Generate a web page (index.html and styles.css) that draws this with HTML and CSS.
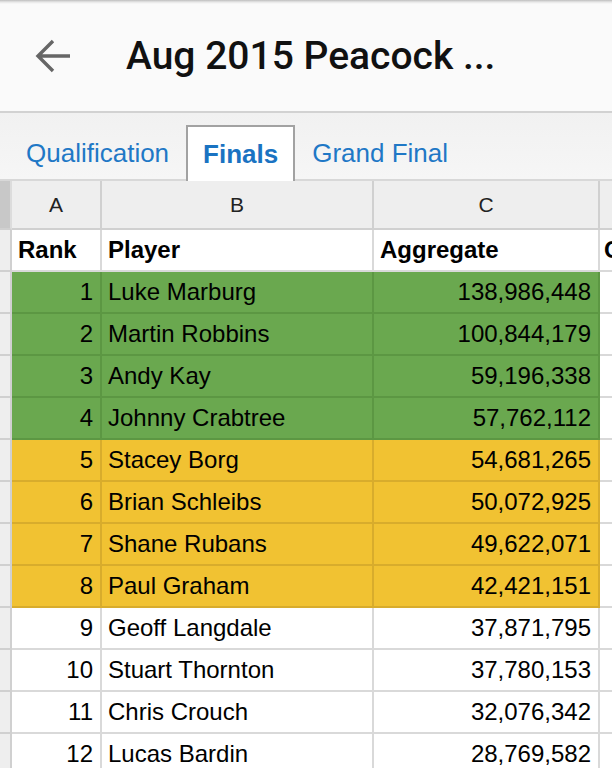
FILE: index.html
```html
<!DOCTYPE html>
<html>
<head>
<meta charset="utf-8">
<link rel="stylesheet" href="styles.css">
</head>
<body>
<div class="app">
  <header class="topbar">
    <svg class="back" width="36" height="34" viewBox="0 0 36 34"><path d="M35 17H3M18 2L3 17L18 32" fill="none" stroke="#666" stroke-width="3.4"/></svg>
    <h1 class="title">Aug 2015 Peacock ...</h1>
  </header>
  <nav class="tabs">
    <span class="tab">Qualification</span>
    <span class="tab active">Finals</span>
    <span class="tab">Grand Final</span>
  </nav>
  <div class="sheet">
    <div class="row letters"><div class="rh corner"></div><div class="cell">A</div><div class="cell">B</div><div class="cell">C</div><div class="cell d"></div></div>
    <div class="row head"><div class="rh"></div><div class="cell">Rank</div><div class="cell">Player</div><div class="cell">Aggregate</div><div class="cell d">Cut</div></div>
    <div class="row green"><div class="rh"></div><div class="cell num">1</div><div class="cell">Luke Marburg</div><div class="cell num">138,986,448</div><div class="cell d"></div></div>
    <div class="row green"><div class="rh"></div><div class="cell num">2</div><div class="cell">Martin Robbins</div><div class="cell num">100,844,179</div><div class="cell d"></div></div>
    <div class="row green"><div class="rh"></div><div class="cell num">3</div><div class="cell">Andy Kay</div><div class="cell num">59,196,338</div><div class="cell d"></div></div>
    <div class="row green"><div class="rh"></div><div class="cell num">4</div><div class="cell">Johnny Crabtree</div><div class="cell num">57,762,112</div><div class="cell d"></div></div>
    <div class="row yellow"><div class="rh"></div><div class="cell num">5</div><div class="cell">Stacey Borg</div><div class="cell num">54,681,265</div><div class="cell d"></div></div>
    <div class="row yellow"><div class="rh"></div><div class="cell num">6</div><div class="cell">Brian Schleibs</div><div class="cell num">50,072,925</div><div class="cell d"></div></div>
    <div class="row yellow"><div class="rh"></div><div class="cell num">7</div><div class="cell">Shane Rubans</div><div class="cell num">49,622,071</div><div class="cell d"></div></div>
    <div class="row yellow"><div class="rh"></div><div class="cell num">8</div><div class="cell">Paul Graham</div><div class="cell num">42,421,151</div><div class="cell d"></div></div>
    <div class="row"><div class="rh"></div><div class="cell num">9</div><div class="cell">Geoff Langdale</div><div class="cell num">37,871,795</div><div class="cell d"></div></div>
    <div class="row"><div class="rh"></div><div class="cell num">10</div><div class="cell">Stuart Thornton</div><div class="cell num">37,780,153</div><div class="cell d"></div></div>
    <div class="row"><div class="rh"></div><div class="cell num">11</div><div class="cell">Chris Crouch</div><div class="cell num">32,076,342</div><div class="cell d"></div></div>
    <div class="row"><div class="rh"></div><div class="cell num">12</div><div class="cell">Lucas Bardin</div><div class="cell num">28,769,582</div><div class="cell d"></div></div>
  </div>
</div>
</body>
</html>
```
FILE: styles.css
```css
* { box-sizing: border-box; }
html, body { margin: 0; padding: 0; overflow: hidden; background: #fff; }
.app { width: 612px; height: 768px; overflow: hidden; font-family: "Liberation Sans", Arial, sans-serif; }

.topbar {
  height: 113px;
  display: flex;
  align-items: center;
  padding-left: 35px;
  background: linear-gradient(#bdbdbd 0, #e6e6e6 2px, #fafafa 4px, #fafafa 100%);
  border-bottom: 2px solid #d2d2d2;
}
.back { flex: none; }
.title {
  margin: 0 0 0 55px;
  font-family: Roboto, "Noto Sans", sans-serif;
  font-weight: 500;
  font-size: 39px;
  color: #111;
}

.tabs {
  height: 68px;
  display: flex;
  align-items: flex-end;
  padding-left: 9px;
  background: linear-gradient(#f1f1f1, #f6f6f6);
  border-bottom: 2px solid #d8d8d8;
}
.tab {
  height: 54px;
  display: flex;
  align-items: center;
  padding: 0 15px;
  border: 2px solid transparent;
  border-bottom: none;
  font-size: 26px;
  color: #1f78c6;
}
.tab.active {
  background: #fff;
  border-color: #a2a2a2;
  font-weight: bold;
  color: #1a73c2;
  margin-bottom: -2px;
  height: 56px;
}

.sheet { display: flex; flex-direction: column; }
.row {
  display: grid;
  grid-template-columns: 12px 90px 272px 226px 1fr;
  height: 42px;
  font-size: 24px;
  color: #000;
}
.cell, .rh {
  display: flex;
  align-items: center;
  border-right: 2px solid #d9d9d9;
  border-bottom: 2px solid #d9d9d9;
  padding: 0 6px;
  white-space: nowrap;
  overflow: hidden;
  background: #fff;
}
.rh { background: #eeeeee; border-color: #d0d0d0; padding: 0; }
.num { justify-content: flex-end; padding-right: 7px; }
.d { border-right: none; }

.letters { height: 49px; }
.letters .cell {
  background: #eeeeee;
  border-color: #d0d0d0;
  justify-content: center;
  font-size: 21px;
  color: #222;
}
.letters .corner { background: #c8c8c8; border-right-color: #dcdcdc; }

.head .cell { font-weight: bold; padding-left: 6px; }
.head .d { padding-left: 4px; }

.green .cell:not(.d) { background: #6aa84f; border-color: #5c9743; }
.yellow .cell:not(.d) { background: #f1c232; border-color: #d8ac2c; }
```
